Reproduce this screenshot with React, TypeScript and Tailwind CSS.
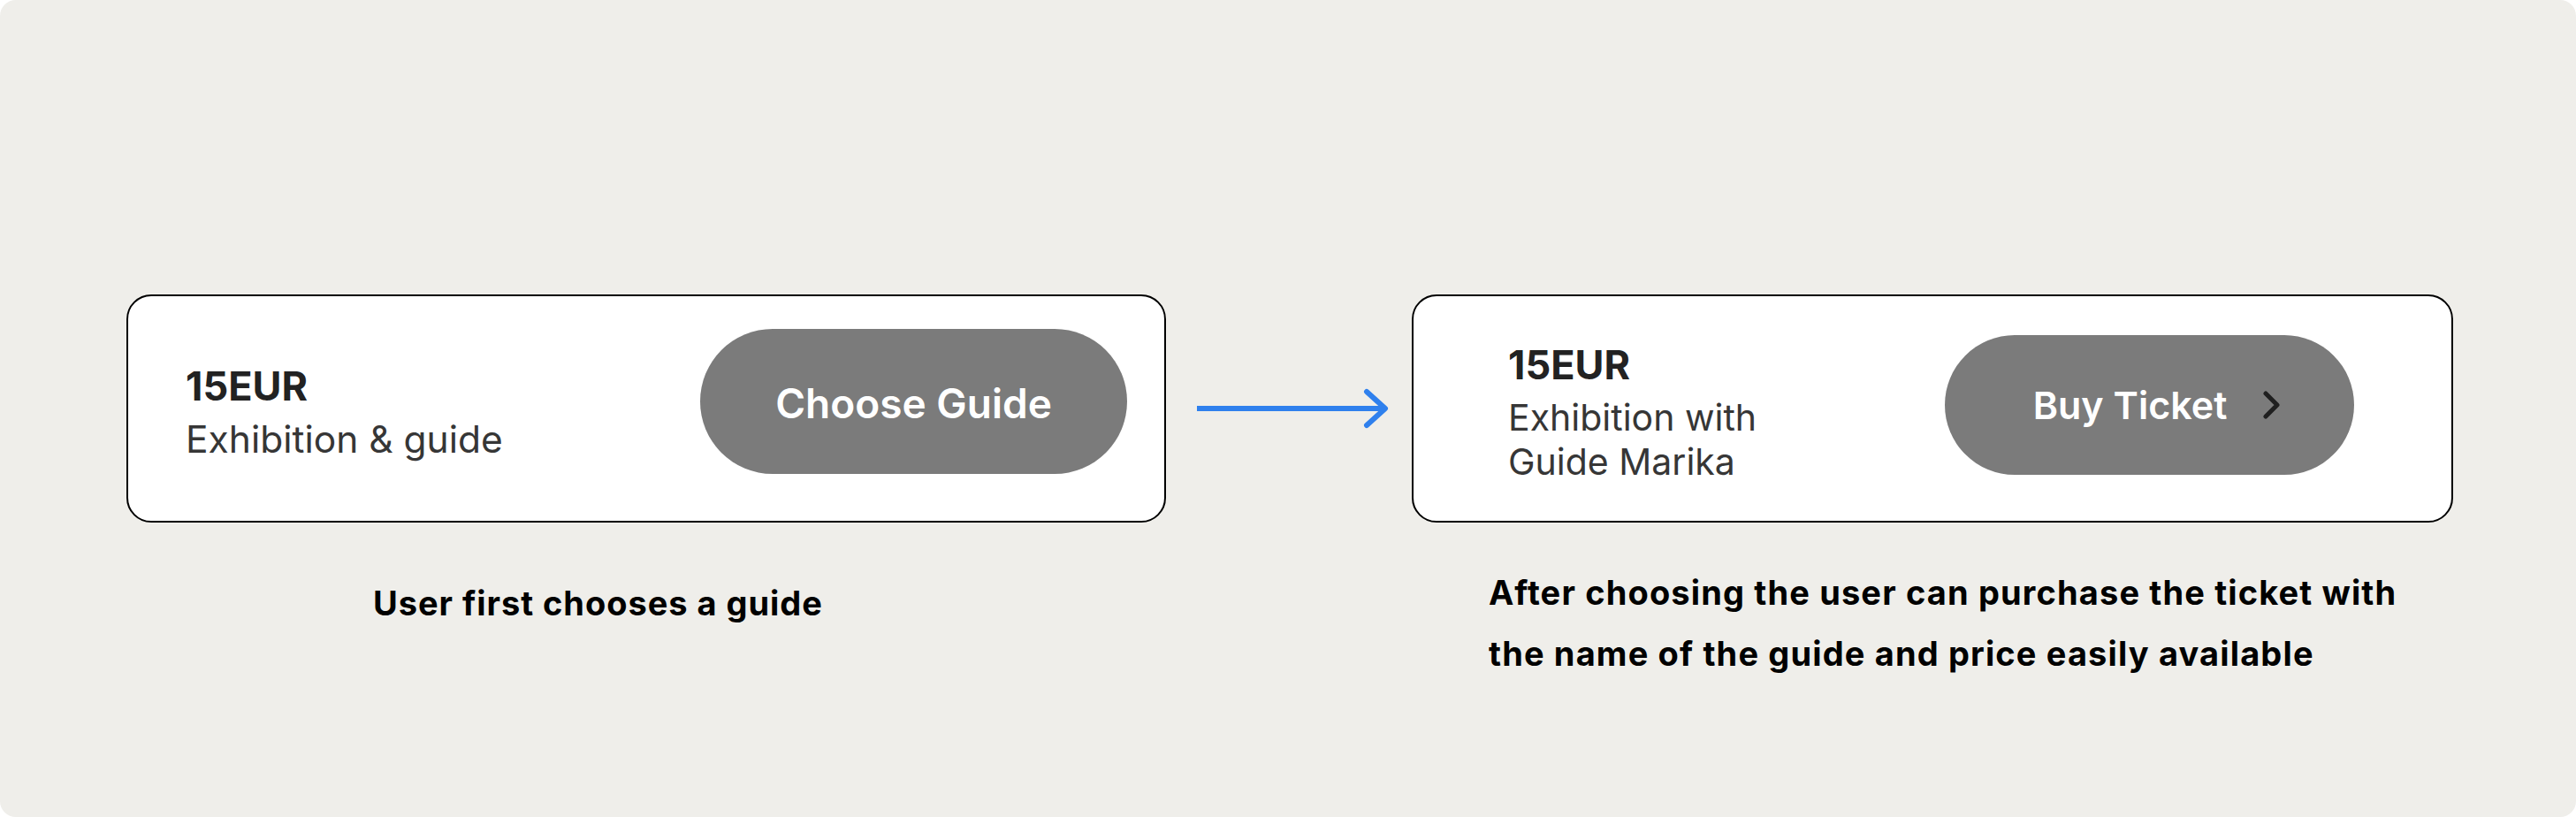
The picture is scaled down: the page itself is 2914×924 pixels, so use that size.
function Arrow() {
  return (
    <svg width="222" height="46" viewBox="0 0 222 46" fill="none">
      <line x1="0" y1="23" x2="214" y2="23" stroke="#2f80ed" strokeWidth="6" />
      <polyline
        points="192,4 213,23 192,42"
        stroke="#2f80ed"
        strokeWidth="6"
        strokeLinecap="round"
        strokeLinejoin="round"
      />
    </svg>
  );
}

function Chevron() {
  return (
    <svg width="22" height="32" viewBox="0 0 22 32" fill="none">
      <polyline
        points="4,3 17,16 4,29"
        stroke="#1f1f1f"
        strokeWidth="5"
        strokeLinecap="round"
        strokeLinejoin="round"
      />
    </svg>
  );
}

export default function App() {
  return (
    <div className="h-[924px] w-[2914px] bg-white font-['Inter',sans-serif]">
      <div className="flex h-full w-full items-start rounded-[18px] bg-[#efeeea] pl-[143px] pt-[333px]">
        {/* before */}
        <div className="flex w-[1176px] flex-col">
          <div className="flex h-[258px] items-start justify-between rounded-[28px] border-2 border-black bg-white pl-[65px] pr-[42px]">
            <div className="mt-[76px] flex flex-col">
              <span className="text-[45px] font-bold leading-[52px] text-[#222]">15EUR</span>
              <span className="mt-[9px] text-[42.5px] leading-[50px] text-[#363636]">Exhibition &amp; guide</span>
            </div>
            <button className="mt-[37px] flex h-[164px] w-[483px] items-center justify-center rounded-full bg-[#7b7b7b] pt-[4px] text-[46px] font-semibold text-white">
              Choose Guide
            </button>
          </div>
          <p className="ml-[279px] mt-[57px] text-[38px] font-bold leading-[69px] tracking-[0.025em] text-black">
            User first chooses a guide
          </p>
        </div>

        {/* arrow */}
        <div className="flex h-[258px] w-[278px] items-center pl-[35px]">
          <Arrow />
        </div>

        {/* after */}
        <div className="flex w-[1178px] flex-col">
          <div className="flex h-[258px] items-start justify-between rounded-[28px] border-2 border-black bg-white pl-[107px] pr-[110px]">
            <div className="mt-[52px] flex flex-col">
              <span className="text-[45px] font-bold leading-[52px] text-[#222]">15EUR</span>
              <span className="mt-[8px] text-[41px] leading-[50px] text-[#363636]">
                Exhibition with
                <br />
                Guide Marika
              </span>
            </div>
            <button className="mt-[44px] flex h-[158px] w-[463px] items-center justify-center gap-[40px] rounded-full bg-[#7b7b7b] pl-[18px] text-[43px] font-semibold text-white">
              <span>Buy Ticket</span>
              <Chevron />
            </button>
          </div>
          <p className="ml-[87px] mt-[45px] text-[38px] font-bold leading-[69px] tracking-[0.03em] text-black">
            After choosing the user can purchase the ticket with
            <br />
            the name of the guide and price easily available
          </p>
        </div>
      </div>
    </div>
  );
}
